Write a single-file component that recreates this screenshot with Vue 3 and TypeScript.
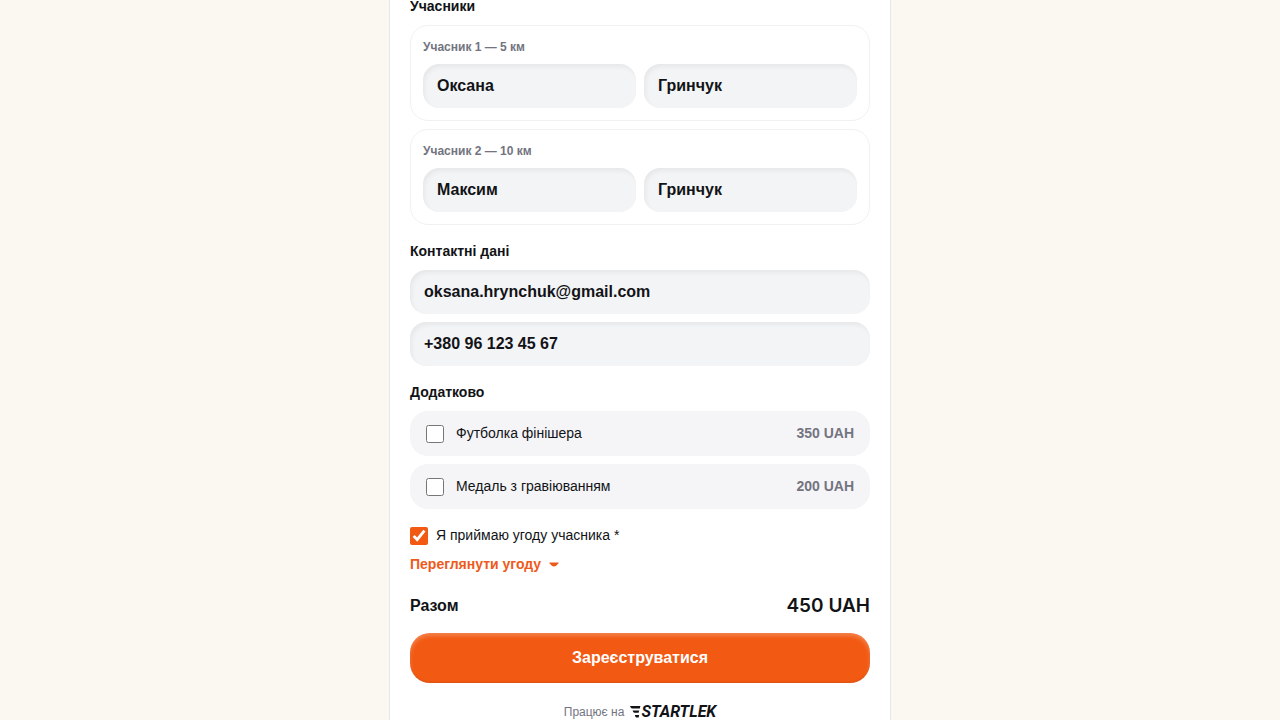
<script setup lang="ts">
import { reactive, ref } from 'vue'

interface Participant {
  id: number
  distance: string
  firstName: string
  lastName: string
}

interface Extra {
  id: string
  name: string
  price: number
  selected: boolean
}

const participants = reactive<Participant[]>([
  { id: 1, distance: '5 км', firstName: 'Оксана', lastName: 'Гринчук' },
  { id: 2, distance: '10 км', firstName: 'Максим', lastName: 'Гринчук' },
])

const extras = reactive<Extra[]>([
  { id: 'shirt', name: 'Футболка фінішера', price: 350, selected: false },
  { id: 'medal', name: 'Медаль з гравіюванням', price: 200, selected: false },
])

const email = ref('oksana.hrynchuk@gmail.com')
const phone = ref('+380 96 123 45 67')
const accepted = ref(true)
const basePrice = 450

const total = () => basePrice + extras.reduce((sum, e) => sum + (e.selected ? e.price : 0), 0)
</script>

<template>
  <div class="page">
    <form class="panel" @submit.prevent>
      <section class="section">
        <h2 class="heading">Учасники</h2>
        <fieldset v-for="p in participants" :key="p.id" class="card">
          <div class="card-title">Учасник {{ p.id }} — {{ p.distance }}</div>
          <div class="names">
            <input v-model="p.firstName" class="field" type="text" aria-label="Ім’я" />
            <input v-model="p.lastName" class="field" type="text" aria-label="Прізвище" />
          </div>
        </fieldset>
      </section>

      <section class="section">
        <h2 class="heading">Контактні дані</h2>
        <input v-model="email" class="field" type="email" aria-label="Email" />
        <input v-model="phone" class="field" type="tel" aria-label="Телефон" />
      </section>

      <section class="section">
        <h2 class="heading">Додатково</h2>
        <label v-for="e in extras" :key="e.id" class="extra">
          <input v-model="e.selected" class="check" type="checkbox" />
          <span class="extra-name">{{ e.name }}</span>
          <span class="extra-price">{{ e.price }} UAH</span>
        </label>
      </section>

      <section class="section">
        <label class="agree">
          <input v-model="accepted" class="check" type="checkbox" />
          <span>Я приймаю угоду учасника *</span>
        </label>
        <button class="terms" type="button">
          Переглянути угоду
          <svg width="10" height="6" viewBox="0 0 10 6" aria-hidden="true">
            <path d="M1 0.5H9Q10.2 0.5 9.4 1.5Q7 4.6 5 4.6T0.6 1.5Q-0.2 0.5 1 0.5Z" fill="currentColor" />
          </svg>
        </button>
      </section>

      <div class="total">
        <span class="total-label">Разом</span>
        <span class="total-value">{{ total() }} UAH</span>
      </div>

      <button class="submit" type="submit">Зареєструватися</button>

      <footer class="powered">
        <span>Працює на</span>
        <a class="brand" href="#" aria-label="STARTLEK">
          <svg width="11" height="13" viewBox="0 0 11 13" aria-hidden="true">
            <path d="M0 0H10.4L9.8 2.4H1.8Q0.5 2 0 0Z M2.6 4.6H9.2L8.6 6.8H4.2Q3 6.4 2.6 4.6Z M4.8 9H9.2L8.6 11.4H6.2Q5.1 10.8 4.8 9Z" fill="currentColor" />
          </svg>
          <span class="brand-name">STARTLEK</span>
        </a>
      </footer>
    </form>
  </div>
</template>

<style>
html,
body {
  background: #fbf8f1;
  overflow: hidden;
}
</style>

<style scoped>
.page {
  height: 100vh;
  overflow: hidden;
  font-family: 'Liberation Sans', Arial, sans-serif;
  font-size: 14px;
  line-height: 21px;
  color: #121316;
}

.panel {
  box-sizing: border-box;
  max-width: 502px;
  min-height: 100vh;
  margin: -4px auto 0;
  padding: 0 20px;
  display: flex;
  flex-direction: column;
  background: #fff;
  border: solid #e5e7eb;
  border-width: 0 1px;
}

.section {
  display: flex;
  flex-direction: column;
  gap: 8px;
  margin-bottom: 16px;
}

.heading {
  margin: 0;
  font-size: 14px;
  font-weight: 700;
}

.card {
  min-width: 0;
  margin: 0;
  padding: 12px;
  border: 1px solid #f1f1f3;
  border-radius: 18px;
}

.card-title {
  margin-bottom: 8px;
  font-size: 12px;
  line-height: 18px;
  font-weight: 700;
  color: #737480;
}

.names {
  display: grid;
  grid-template-columns: 1fr 1fr;
  gap: 8px;
}

.field {
  box-sizing: border-box;
  width: 100%;
  min-width: 0;
  height: 44px;
  padding: 0 14px;
  border: 0;
  border-radius: 16px;
  background: #f3f4f6;
  box-shadow: inset 2px 3px 4px rgba(0, 0, 0, 0.05);
  font: inherit;
  font-size: 16px;
  font-weight: 700;
  color: inherit;
}

.extra {
  display: flex;
  align-items: center;
  gap: 12px;
  padding: 12px 16px;
  border-radius: 18px;
  background: #f5f5f8;
}

.extra-name {
  flex: 1;
}

.extra-price {
  font-weight: 700;
  color: #737480;
}

.check {
  width: 18px;
  height: 18px;
  margin: 0;
  accent-color: #f25912;
}

.agree {
  display: flex;
  align-items: center;
  gap: 8px;
}

.terms {
  align-self: flex-start;
  display: flex;
  align-items: center;
  gap: 8px;
  padding: 0;
  border: 0;
  background: none;
  font: inherit;
  font-weight: 700;
  color: #ee5a1b;
}

.total {
  display: flex;
  align-items: center;
  justify-content: space-between;
  margin-bottom: 12px;
  line-height: 30px;
}

.total-label {
  font-size: 16px;
  font-weight: 700;
}

.total-value {
  font-family: Inter, sans-serif;
  font-size: 19px;
  font-weight: 600;
}

.submit {
  height: 50px;
  padding: 0 16px 2px;
  border: 0;
  border-radius: 20px;
  background: #f25912;
  box-shadow: inset 0 3px 4px rgba(255, 255, 255, 0.25), inset 0 -1px 2px rgba(0, 0, 0, 0.1);
  font: inherit;
  font-size: 16px;
  font-weight: 700;
  color: #fff;
}

.powered {
  display: flex;
  align-items: center;
  justify-content: center;
  gap: 6px;
  margin-top: 20px;
  font-size: 12px;
  line-height: 18px;
  color: #737480;
}

.brand {
  display: flex;
  align-items: center;
  color: #121316;
  text-decoration: none;
}

.brand-name {
  font-family: Roboto, sans-serif;
  font-size: 16px;
  font-style: italic;
  font-weight: 700;
}
</style>
